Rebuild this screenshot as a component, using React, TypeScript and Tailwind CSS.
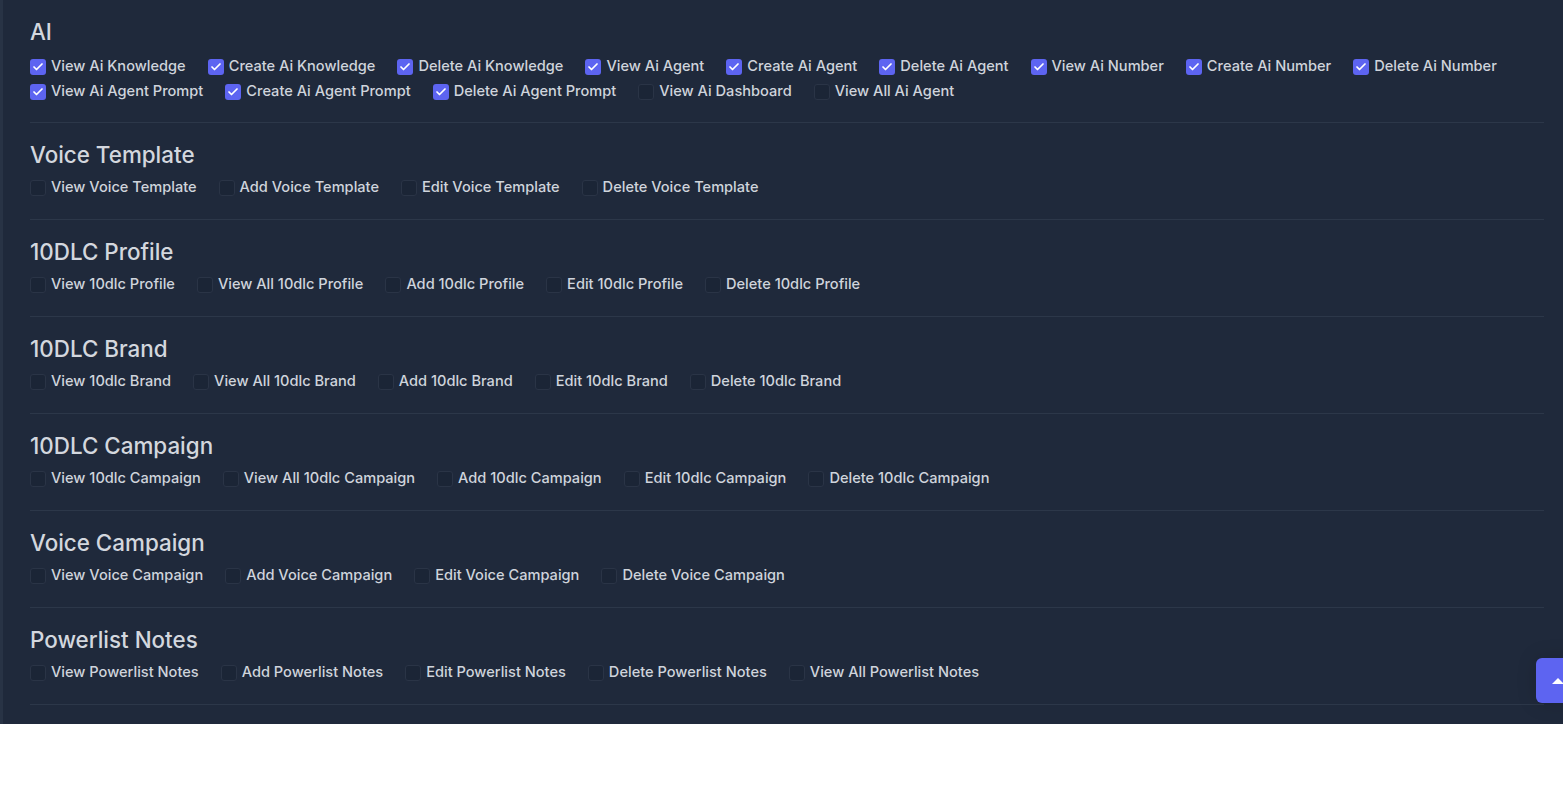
import { Check } from "lucide-react";

type Perm = { label: string; checked?: boolean };
type Group = { title: string; perms: Perm[] };

const groups: Group[] = [
  {
    title: "AI",
    perms: [
      { label: "View Ai Knowledge", checked: true },
      { label: "Create Ai Knowledge", checked: true },
      { label: "Delete Ai Knowledge", checked: true },
      { label: "View Ai Agent", checked: true },
      { label: "Create Ai Agent", checked: true },
      { label: "Delete Ai Agent", checked: true },
      { label: "View Ai Number", checked: true },
      { label: "Create Ai Number", checked: true },
      { label: "Delete Ai Number", checked: true },
      { label: "View Ai Agent Prompt", checked: true },
      { label: "Create Ai Agent Prompt", checked: true },
      { label: "Delete Ai Agent Prompt", checked: true },
      { label: "View Ai Dashboard" },
      { label: "View All Ai Agent" },
    ],
  },
  {
    title: "Voice Template",
    perms: [
      { label: "View Voice Template" },
      { label: "Add Voice Template" },
      { label: "Edit Voice Template" },
      { label: "Delete Voice Template" },
    ],
  },
  {
    title: "10DLC Profile",
    perms: [
      { label: "View 10dlc Profile" },
      { label: "View All 10dlc Profile" },
      { label: "Add 10dlc Profile" },
      { label: "Edit 10dlc Profile" },
      { label: "Delete 10dlc Profile" },
    ],
  },
  {
    title: "10DLC Brand",
    perms: [
      { label: "View 10dlc Brand" },
      { label: "View All 10dlc Brand" },
      { label: "Add 10dlc Brand" },
      { label: "Edit 10dlc Brand" },
      { label: "Delete 10dlc Brand" },
    ],
  },
  {
    title: "10DLC Campaign",
    perms: [
      { label: "View 10dlc Campaign" },
      { label: "View All 10dlc Campaign" },
      { label: "Add 10dlc Campaign" },
      { label: "Edit 10dlc Campaign" },
      { label: "Delete 10dlc Campaign" },
    ],
  },
  {
    title: "Voice Campaign",
    perms: [
      { label: "View Voice Campaign" },
      { label: "Add Voice Campaign" },
      { label: "Edit Voice Campaign" },
      { label: "Delete Voice Campaign" },
    ],
  },
  {
    title: "Powerlist Notes",
    perms: [
      { label: "View Powerlist Notes" },
      { label: "Add Powerlist Notes" },
      { label: "Edit Powerlist Notes" },
      { label: "Delete Powerlist Notes" },
      { label: "View All Powerlist Notes" },
    ],
  },
];

function PermCheck({ label, checked }: Perm) {
  return (
    <label className="flex h-5 items-center gap-[5px]">
      {checked ? (
        <span className="flex h-4 w-4 items-center justify-center rounded-[3px] bg-[#5d64f1]">
          <Check className="h-3 w-3 text-white" strokeWidth={3.5} />
        </span>
      ) : (
        <span className="h-4 w-4 rounded-[3px] border border-[#2a3446] bg-[#1b2536]" />
      )}
      <span className="text-[14.6px] font-medium text-[#cfd4dc]">{label}</span>
    </label>
  );
}

export default function App() {
  return (
    <div
      className="relative h-[724px] border-l-[3px] border-[#283345] bg-[#1f293b] pl-[27px] pr-[19px]"
      style={{ fontFamily: "Inter, 'Noto Sans', sans-serif" }}
    >
      {groups.map((g, i) => (
        <section
          key={g.title}
          className={`border-b border-[#2c3749] pt-4 ${i === 0 ? "pb-5" : "pb-[21px]"}`}
        >
          <h2 className="h-8 text-[22.4px] font-medium leading-8 text-[#d3d7de]">{g.title}</h2>
          <div className={`flex flex-wrap gap-x-[22px] gap-y-[5px] ${i === 0 ? "mt-[9px]" : "mt-[7px]"}`}>
            {g.perms.map((p) => (
              <PermCheck key={p.label} {...p} />
            ))}
          </div>
        </section>
      ))}
      <button
        type="button"
        className="absolute left-[1533px] top-[658px] flex h-[45px] w-[44px] items-center justify-center rounded-md bg-[#5d64f1] shadow-[0_0_20px_rgba(0,0,0,0.15)]"
      >
        <svg width="14" height="8" viewBox="0 0 14 8">
          <path d="M7 1 L13 7 L1 7 Z" fill="white" />
        </svg>
      </button>
    </div>
  );
}
